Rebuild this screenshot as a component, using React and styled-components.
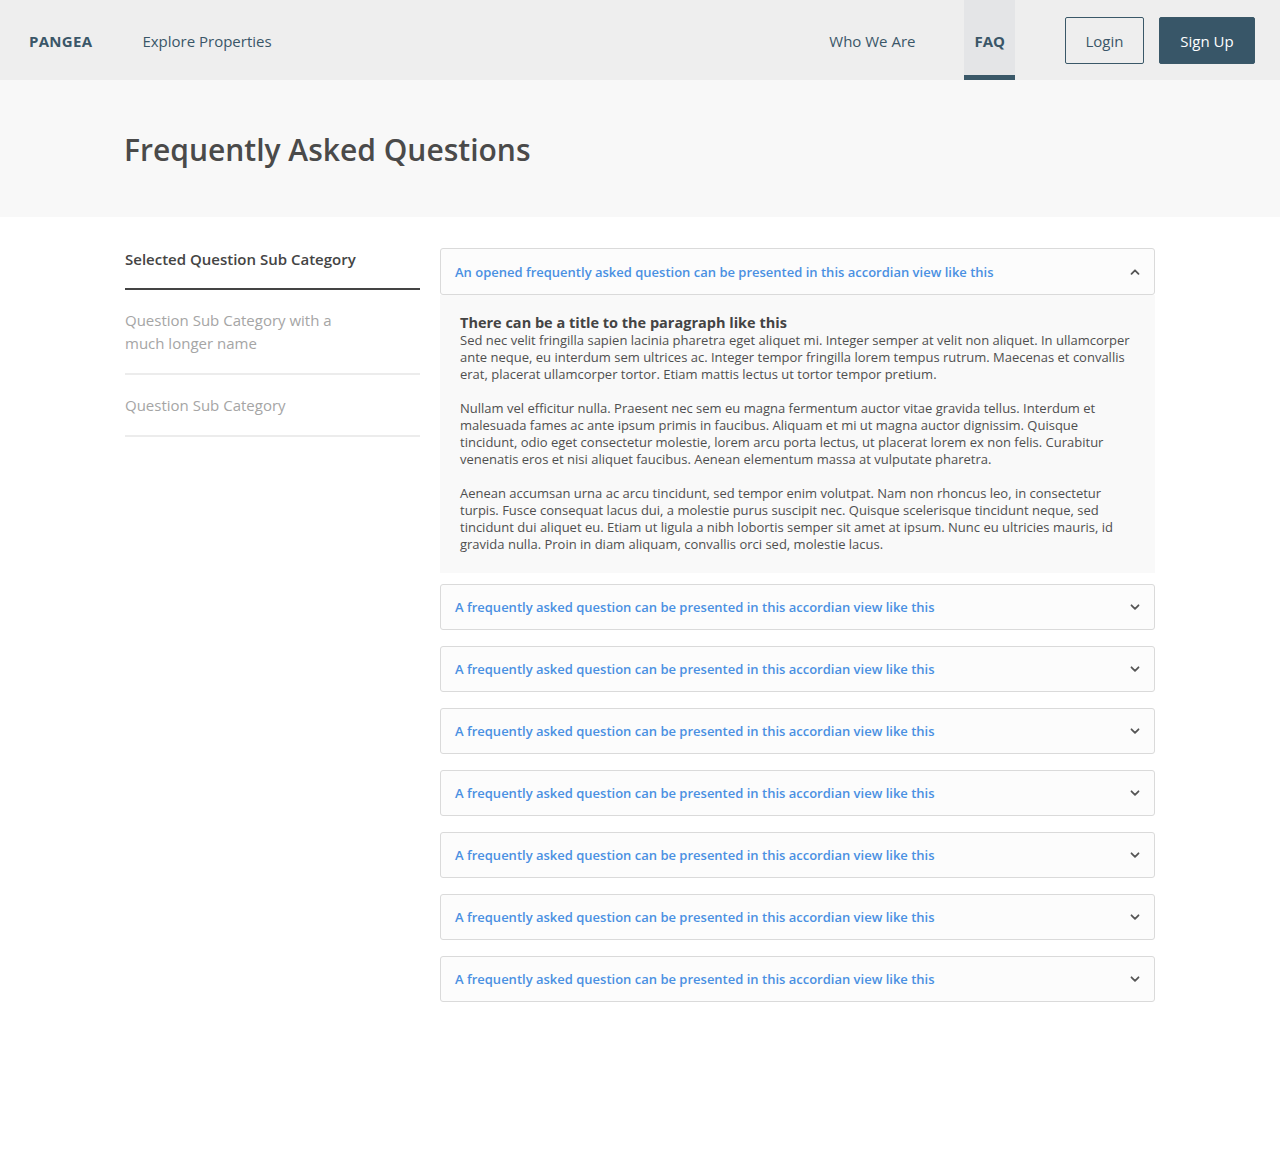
import React from "react";
import styled, { createGlobalStyle } from "styled-components";

const GlobalStyle = createGlobalStyle`
  html, body { margin: 0; padding: 0; background: #ffffff; }
  body { font-family: "Open Sans", Lato, sans-serif; color: #4a4a4a; }
  * { box-sizing: border-box; }
`;

const Page = styled.div`
  min-height: 1154px;
  background: #ffffff;
`;

const Nav = styled.nav`
  display: flex;
  align-items: stretch;
  height: 80px;
  background: #eeeeee;
  padding: 0 25px 0 29px;
`;

const NavGroup = styled.div`
  display: flex;
  align-items: center;
  gap: ${(p) => p.$gap || 0}px;
  margin-left: ${(p) => (p.$right ? "auto" : "0")};
  height: 100%;
`;

const Brand = styled.a`
  font-size: 15px;
  font-weight: 700;
  letter-spacing: 0.3px;
  color: #3a5668;
  text-decoration: none;
  padding-top: 2px;
`;

const NavLink = styled.a`
  display: flex;
  align-items: center;
  height: 100%;
  padding: 2px 10px 0;
  font-size: 15px;
  font-weight: ${(p) => (p.$active ? 700 : 400)};
  color: #3a5668;
  text-decoration: none;
  background: ${(p) => (p.$active ? "#e4e5e7" : "transparent")};
  box-shadow: ${(p) => (p.$active ? "inset 0 -5px 0 #3a5868" : "none")};
`;

const Button = styled.button`
  width: ${(p) => p.$w}px;
  height: 47px;
  padding: 2px 0 0;
  font-family: inherit;
  font-size: 15px;
  border-radius: 2px;
  border: 1px solid #3a5868;
  background: ${(p) => (p.$primary ? "#385668" : "transparent")};
  color: ${(p) => (p.$primary ? "#ffffff" : "#3a5668")};
  cursor: pointer;
`;

const Hero = styled.header`
  display: flex;
  align-items: center;
  height: 137px;
  padding: 2px 0 0 124px;
  background: #f8f8f8;
`;

const Title = styled.h1`
  margin: 0;
  font-size: 30px;
  font-weight: 600;
  color: #4a4a4a;
`;

const Content = styled.main`
  display: flex;
  align-items: flex-start;
  gap: 20px;
  padding: 31px 125px 0 125px;
`;

const Sidebar = styled.aside`
  width: 295px;
  flex: none;
`;

const SideItem = styled.div`
  padding: ${(p) => (p.$selected ? "0 0 17px" : "19px 60px 18px 0")};
  border-bottom: ${(p) => (p.$selected ? "2px solid #444444" : "2px solid #ececec")};
  font-size: 15px;
  line-height: 23px;
  font-weight: ${(p) => (p.$selected ? 600 : 400)};
  color: ${(p) => (p.$selected ? "#444444" : "#a5a5a5")};
`;

const Accordion = styled.section`
  width: 715px;
  flex: none;
  display: flex;
  flex-direction: column;
`;

const Item = styled.div`
  margin-bottom: ${(p) => (p.$open ? 11 : 16)}px;
`;

const Header = styled.div`
  display: flex;
  align-items: center;
  justify-content: space-between;
  height: ${(p) => (p.$open ? 47 : 46)}px;
  padding: 0 13px 0 14px;
  border: 1px solid #dadada;
  border-radius: 3px;
  background: #fcfcfc;
  cursor: pointer;
`;

const Question = styled.span`
  font-size: 13px;
  font-weight: 600;
  color: #4a90e2;
`;

const Panel = styled.div`
  padding: 19px 20px 20px;
  background: #f9f9f9;
`;

const PanelTitle = styled.h3`
  margin: 0;
  font-size: 14.5px;
  line-height: 18px;
  font-weight: 700;
  color: #444444;
`;

const Para = styled.p`
  margin: 0 0 17px;
  font-size: 13px;
  line-height: 17px;
  color: #4f4f4f;
  &:last-child { margin-bottom: 0; }
`;

const Chevron = ({ up }) => (
  <svg width="12" height="12" viewBox="0 0 12 12" fill="none">
    <path
      d={up ? "M2.5 7.8 L6 4.3 L9.5 7.8" : "M2.5 4.3 L6 7.8 L9.5 4.3"}
      stroke="#555555"
      strokeWidth="1.8"
      strokeLinecap="round"
      strokeLinejoin="round"
    />
  </svg>
);

const paragraphs = [
  "Sed nec velit fringilla sapien lacinia pharetra eget aliquet mi. Integer semper at velit non aliquet. In ullamcorper ante neque, eu interdum sem ultrices ac. Integer tempor fringilla lorem tempus rutrum. Maecenas et convallis erat, placerat ullamcorper tortor. Etiam mattis lectus ut tortor tempor pretium.",
  "Nullam vel efficitur nulla. Praesent nec sem eu magna fermentum auctor vitae gravida tellus. Interdum et malesuada fames ac ante ipsum primis in faucibus. Aliquam et mi ut magna auctor dignissim. Quisque tincidunt, odio eget consectetur molestie, lorem arcu porta lectus, ut placerat lorem ex non felis. Curabitur venenatis eros et nisi aliquet faucibus. Aenean elementum massa at vulputate pharetra.",
  "Aenean accumsan urna ac arcu tincidunt, sed tempor enim volutpat. Nam non rhoncus leo, in consectetur turpis. Fusce consequat lacus dui, a molestie purus suscipit nec. Quisque scelerisque tincidunt neque, sed tincidunt dui aliquet eu. Etiam ut ligula a nibh lobortis semper sit amet at ipsum. Nunc eu ultricies mauris, id gravida nulla. Proin in diam aliquam, convallis orci sed, molestie lacus.",
];

const closedCount = 7;

export default function App() {
  return (
    <Page>
      <GlobalStyle />
      <Nav>
        <NavGroup $gap={50}>
          <Brand href="#">PANGEA</Brand>
          <NavLink href="#" style={{ paddingLeft: 0 }}>Explore Properties</NavLink>
        </NavGroup>
        <NavGroup $right>
          <NavLink href="#">Who We Are</NavLink>
          <NavLink href="#" $active style={{ marginLeft: 39, marginRight: 50 }}>FAQ</NavLink>
          <Button $w={79}>Login</Button>
          <Button $w={96} $primary style={{ marginLeft: 15 }}>Sign Up</Button>
        </NavGroup>
      </Nav>
      <Hero>
        <Title>Frequently Asked Questions</Title>
      </Hero>
      <Content>
        <Sidebar>
          <SideItem $selected>Selected Question Sub Category</SideItem>
          <SideItem>Question Sub Category with a much longer name</SideItem>
          <SideItem>Question Sub Category</SideItem>
        </Sidebar>
        <Accordion>
          <Item $open>
            <Header $open>
              <Question>An opened frequently asked question can be presented in this accordian view like this</Question>
              <Chevron up />
            </Header>
            <Panel>
              <PanelTitle>There can be a title to the paragraph like this</PanelTitle>
              {paragraphs.map((t, i) => (
                <Para key={i}>{t}</Para>
              ))}
            </Panel>
          </Item>
          {Array.from({ length: closedCount }).map((_, i) => (
            <Item key={i}>
              <Header>
                <Question>A frequently asked question can be presented in this accordian view like this</Question>
                <Chevron />
              </Header>
            </Item>
          ))}
        </Accordion>
      </Content>
    </Page>
  );
}
